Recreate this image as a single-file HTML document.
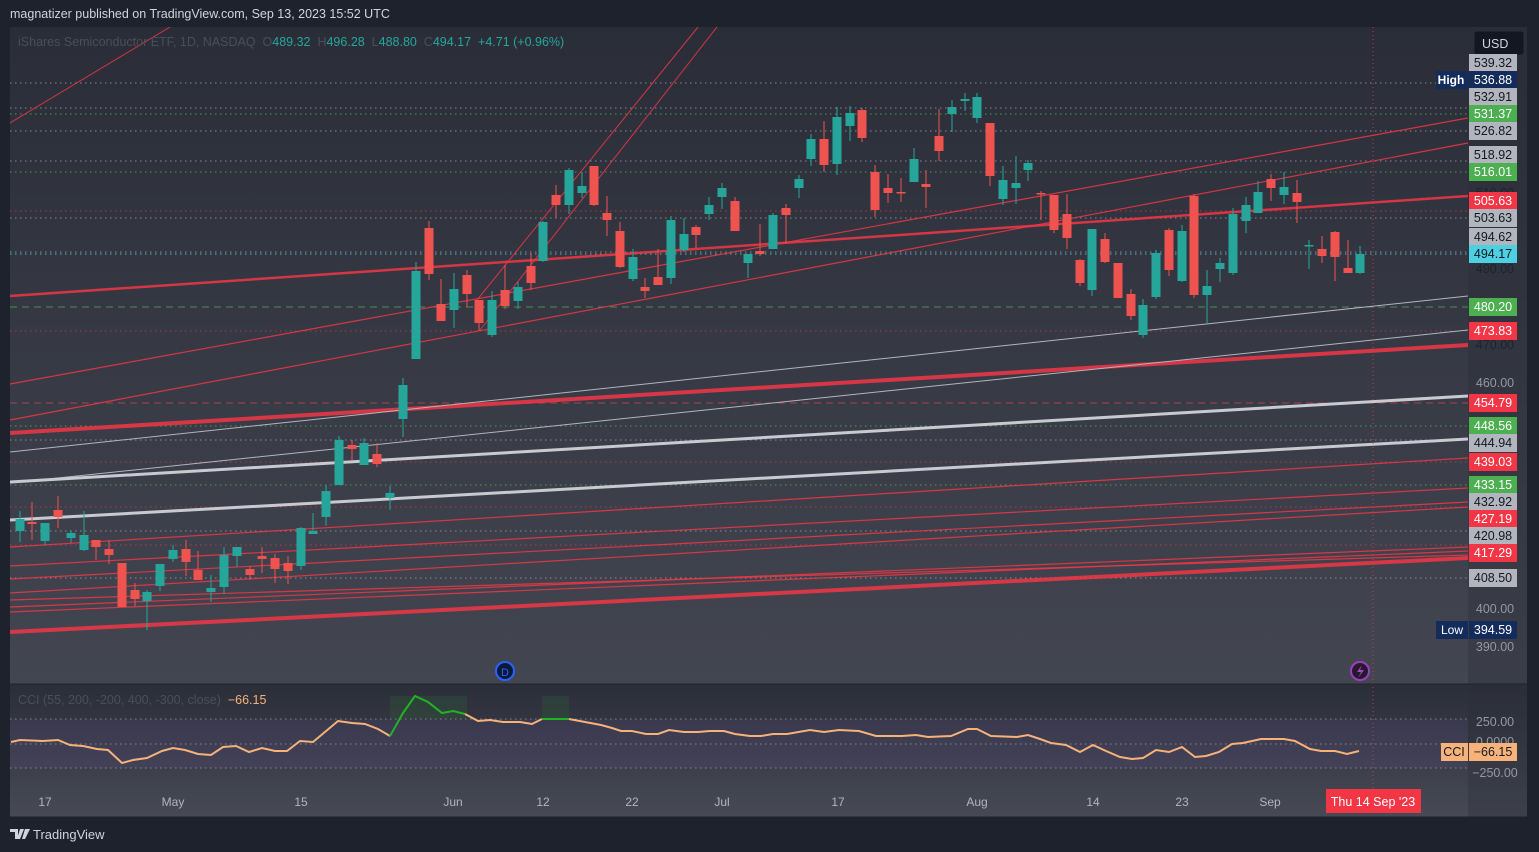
<!DOCTYPE html>
<html><head><meta charset="utf-8"><style>
html,body{margin:0;padding:0;background:#1e222d;width:1539px;height:852px;overflow:hidden;font-family:"Liberation Sans",sans-serif}
#hdr{position:absolute;left:10px;top:7px;color:#d1d4dc;font-size:12.5px}
svg text{font-family:"Liberation Sans",sans-serif}
</style></head><body>
<div id="hdr">magnatizer published on TradingView.com, Sep 13, 2023 15:52 UTC</div>
<svg width="1539" height="852" style="position:absolute;left:0;top:0">
<defs>
<linearGradient id="gm" x1="0" y1="0" x2="0" y2="1"><stop offset="0" stop-color="#2a2d38"/><stop offset="1" stop-color="#434651"/></linearGradient>
<linearGradient id="gc" x1="0" y1="0" x2="0" y2="1"><stop offset="0" stop-color="#2b2e39"/><stop offset="1" stop-color="#474a55"/></linearGradient>
<clipPath id="cm"><rect x="10" y="27" width="1458" height="657"/></clipPath>
</defs>
<rect x="10" y="27" width="1517" height="657" fill="url(#gm)"/>
<rect x="10" y="684" width="1517" height="133" fill="url(#gc)"/>
<rect x="1468" y="27" width="59" height="790" fill="#2a2d36" opacity="0.35"/>
<g clip-path="url(#cm)">
<g stroke-width="1" stroke-dasharray="1.5,3.5" fill="none" opacity="0.85">
<line x1="10" x2="1468" y1="83" y2="83" stroke="#9598a1"/>
<line x1="10" x2="1468" y1="108" y2="108" stroke="#9598a1"/>
<line x1="10" x2="1468" y1="114" y2="114" stroke="#4caf50"/>
<line x1="10" x2="1468" y1="131" y2="131" stroke="#9598a1"/>
<line x1="10" x2="1468" y1="161" y2="161" stroke="#9598a1"/>
<line x1="10" x2="1468" y1="172" y2="172" stroke="#4caf50"/>
<line x1="10" x2="1468" y1="211" y2="211" stroke="#c2394a"/>
<line x1="10" x2="1468" y1="218" y2="218" stroke="#9598a1"/>
<line x1="10" x2="1468" y1="252" y2="252" stroke="#9598a1"/>
<line x1="10" x2="1468" y1="254" y2="254" stroke="#4dd0e1"/>
<line x1="10" x2="1468" y1="331" y2="331" stroke="#c2394a"/>
<line x1="10" x2="1468" y1="426" y2="426" stroke="#4caf50"/>
<line x1="10" x2="1468" y1="440" y2="440" stroke="#9598a1"/>
<line x1="10" x2="1468" y1="462" y2="462" stroke="#c2394a"/>
<line x1="10" x2="1468" y1="485" y2="485" stroke="#4caf50"/>
<line x1="10" x2="1468" y1="507" y2="507" stroke="#c2394a"/>
<line x1="10" x2="1468" y1="531" y2="531" stroke="#9598a1"/>
<line x1="10" x2="1468" y1="545" y2="545" stroke="#c2394a"/>
<line x1="10" x2="1468" y1="578" y2="578" stroke="#9598a1"/>
</g>
<line x1="10" x2="1468" y1="307" y2="307" stroke="#4a8f4e" stroke-dasharray="7,5"/>
<line x1="10" x2="1468" y1="403" y2="403" stroke="#a6424e" stroke-dasharray="7,5"/>
<g stroke="#f23645" fill="none" stroke-opacity="0.85">
<line x1="10" y1="123" x2="170" y2="27" stroke-width="1"/>
<line x1="477" y1="300" x2="698" y2="27" stroke-width="1"/>
<line x1="480" y1="330" x2="717" y2="27" stroke-width="1"/>
<line x1="10" y1="384" x2="1468" y2="118" stroke-width="1.2"/>
<line x1="10" y1="420" x2="1468" y2="143" stroke-width="1.2"/>
<line x1="10" y1="296" x2="1468" y2="196" stroke-width="2.5"/>
<line x1="10" y1="433" x2="1468" y2="345" stroke-width="4"/>
<line x1="10" y1="547" x2="1468" y2="458" stroke-width="1.2"/>
<line x1="10" y1="566" x2="1468" y2="488" stroke-width="1.2"/>
<line x1="10" y1="579" x2="1468" y2="502" stroke-width="1.2"/>
<line x1="10" y1="593" x2="1468" y2="507" stroke-width="1.2"/>
<line x1="10" y1="607" x2="1468" y2="547" stroke-width="1.2"/>
<line x1="10" y1="612" x2="1468" y2="551" stroke-width="1.2"/>
<line x1="10" y1="600" x2="1468" y2="555" stroke-width="1.2"/>
<line x1="10" y1="632" x2="1468" y2="558" stroke-width="4"/>
</g>
<g stroke="#b2b5be" fill="none">
<line x1="10" y1="452" x2="1468" y2="296" stroke-width="1"/>
<line x1="10" y1="483" x2="1468" y2="330" stroke-width="1"/>
<line x1="10" y1="482" x2="1468" y2="396" stroke-width="3" stroke="#c8cad0"/>
<line x1="10" y1="520" x2="1468" y2="439" stroke-width="3" stroke="#c8cad0"/>
</g>
<g id="candles"></g>
</g>
<line x1="1373" y1="27" x2="1373" y2="790" stroke="#f23645" stroke-dasharray="1,3" opacity="0.8"/>
<rect x="10" y="719" width="1458" height="49" fill="#7e57c2" opacity="0.1"/>
<g stroke="#9598a1" stroke-dasharray="1.5,3.5" opacity="0.8"><line x1="10" x2="1468" y1="719" y2="719"/><line x1="10" x2="1468" y1="744" y2="744"/><line x1="10" x2="1468" y1="768" y2="768"/></g>
<rect x="390" y="696" width="77" height="23" fill="#2e7d32" opacity="0.18"/>
<rect x="542" y="696" width="27" height="23" fill="#2e7d32" opacity="0.18"/>
<polyline fill="none" stroke="#f7b27a" stroke-width="2" points="11,742 20,740 43,741 58,740 70,745 83,746 97,749 108,750 122,763 133,760 147,758 162,751 173,748 185,750 198,754 211,755 223,747 236,746 249,752 262,748 275,751 287,751 300,741 313,742 338,721 352,723 365,724 378,729 390,736"/>
<polyline fill="none" stroke="#22b226" stroke-width="2" points="390,736 403,713 415,696 428,702 442,713 453,711 465,714"/>
<polyline fill="none" stroke="#f7b27a" stroke-width="2" points="465,714 478,721 490,720 503,722 520,722 532,724 542,719"/>
<polyline fill="none" stroke="#22b226" stroke-width="2" points="542,719 569,719"/>
<polyline fill="none" stroke="#f7b27a" stroke-width="2" points="569,719 601,725 612,728 621,731 632,731 646,734 658,734 669,730 684,732 698,732 710,731 724,731 735,734 750,736 761,736 773,734 787,734 810,730 824,732 839,730 859,731 876,736 902,736 916,735 928,737 951,736 968,729 977,729 991,736 1017,737 1028,735 1040,739 1051,743 1066,745 1080,752 1093,745 1106,751 1120,757 1132,759 1143,758 1156,750 1169,752 1182,747 1195,757 1206,756 1219,752 1232,744 1243,743 1261,739 1272,739 1284,739 1295,741 1310,749 1321,751 1335,751 1347,754 1359,751"/>
<line x1="10" x2="1527" y1="684" y2="684" stroke="#1e222d" stroke-width="1"/>
<circle cx="505" cy="671" r="9" fill="#0c1a3a" stroke="#2962ff" stroke-width="2"/>
<text x="505" y="676" fill="#2962ff" font-size="11" text-anchor="middle">D</text>
<circle cx="1360" cy="671" r="9" fill="#241a2e" stroke="#9c3fbf" stroke-width="2"/>
<path d="M1362 665 L1357 672 L1361 672 L1358 678 L1364 670 L1360 670 Z" fill="#ab47bc"/>
<text x="18" y="46" font-size="12.5" fill="#4a4e5a" xml:space="preserve">iShares Semiconductor ETF, 1D, NASDAQ  O<tspan fill="#26a69a">489.32</tspan>  H<tspan fill="#26a69a">496.28</tspan>  L<tspan fill="#26a69a">488.80</tspan>  C<tspan fill="#26a69a">494.17</tspan>  <tspan fill="#26a69a">+4.71 (+0.96%)</tspan></text>
<text x="18" y="704" font-size="12.5" fill="#4a4e5a" xml:space="preserve">CCI (55, 200, -200, 400, -300, close)  <tspan fill="#f7b27a">−66.15</tspan></text>
<rect x="1474" y="31" width="50" height="24" rx="3" fill="#131722" stroke="#2a2e39"/>
<text x="1482" y="48" font-size="12.5" fill="#d1d4dc">USD</text>
<g font-size="12.5" text-anchor="middle" fill="#9598a1">
<text x="1495" y="273" fill="#1e222d">490.00</text>
<text x="1495" y="349" fill="#1e222d">470.00</text>
<text x="1495" y="387">460.00</text>
<text x="1495" y="613">400.00</text>
<text x="1495" y="651">390.00</text>
<text x="1495" y="197" fill="#1e222d">510.00</text>
<text x="1495" y="726">250.00</text>
<text x="1495" y="746">0.0000</text>
<text x="1495" y="777">−250.00</text>
</g>
<g font-size="12.5" text-anchor="middle" id="lbls"></g>
<rect x="1436" y="71" width="32" height="18" fill="#132c5c"/><text x="1451" y="84" font-size="12" fill="#fff" text-anchor="middle" font-weight="bold">High</text>
<rect x="1436" y="621" width="32" height="18" fill="#132c5c"/><text x="1452" y="634" font-size="12" fill="#fff" text-anchor="middle">Low</text>
<rect x="1441" y="743" width="27" height="18" fill="#f7b27a"/><text x="1454" y="756" font-size="12.5" fill="#131722" text-anchor="middle">CCI</text>
<rect x="1469" y="743" width="48" height="18" fill="#f7b27a"/><text x="1493" y="756" font-size="12.5" fill="#131722" text-anchor="middle">−66.15</text>
<g font-size="12" fill="#b2b5be" text-anchor="middle">
<text x="45" y="806">17</text><text x="173" y="806">May</text><text x="301" y="806">15</text><text x="453" y="806">Jun</text><text x="543" y="806">12</text><text x="632" y="806">22</text><text x="722" y="806">Jul</text><text x="838" y="806">17</text><text x="977" y="806">Aug</text><text x="1093" y="806">14</text><text x="1182" y="806">23</text><text x="1270" y="806">Sep</text>
</g>
<rect x="1326" y="789" width="95" height="24" fill="#f23645"/>
<text x="1373" y="806" font-size="12.5" fill="#fff" text-anchor="middle">Thu 14 Sep '23</text>
<rect x="1527" y="27" width="12" height="790" fill="#1e222d"/>
<line x1="10" x2="1527" y1="817" y2="817" stroke="#1e222d"/>
<path d="M10 829 h8 v10 h-3 v-7 h-5 z M20 829 h4 l-4 10 h-3 z M25 829 h5 l-5 10 h-3 z" fill="#d1d4dc"/>
<text x="33" y="839" font-size="13" fill="#d1d4dc">TradingView</text>
</svg>
<script>
var G='#26a69a',R='#ef5350';
var c=[[20,G,519,531,511,542],[32,R,522,524,502,540],[45,G,523,541,523,545],[58,R,510,517,496,528],[71,G,533,538,530,543],[84,G,535,550,511,551],[96,R,540,547,540,560],[109,R,549,555,540,564],[122,R,563,607,563,607],[135,R,590,599,583,606],[147,G,592,601,590,630],[160,G,564,586,564,591],[173,G,550,559,545,562],[186,R,549,562,540,576],[198,R,570,580,551,580],[211,G,588,592,575,602],[224,G,555,587,547,594],[237,G,547,556,547,567],[250,R,569,575,566,580],[262,R,556,559,547,573],[275,R,558,569,554,583],[288,R,563,571,556,584],[301,G,528,566,527,570],[313,G,531,534,513,534],[326,G,491,517,485,526],[339,G,440,485,436,485],[352,R,445,449,440,460],[364,G,443,465,438,465],[377,R,454,464,443,467],[390,G,493,498,486,510],[403,G,385,419,378,437],
[416,G,271,359,262,359],[429,R,228,274,221,280],[441,R,304,321,279,321],[454,G,289,310,273,328],[467,R,275,294,270,307],[479,R,300,323,300,331],[492,G,300,335,291,337],[505,R,290,306,265,309],[518,G,287,301,282,309],[531,R,266,283,253,290],[543,G,222,261,221,262],[556,R,195,205,185,218],[569,G,170,205,168,214],
[582,G,186,193,172,198],[594,R,166,205,166,206],[607,R,213,220,196,236],[620,R,231,267,222,268],[633,G,257,279,249,281],[645,R,287,291,278,298],[658,R,277,285,249,285],[671,G,220,278,216,284],[684,G,234,250,218,252],[696,R,227,235,225,248],[709,G,205,214,197,220],[722,G,188,197,183,209],[735,R,201,231,197,231],[748,G,254,263,254,278],[760,R,251,254,224,256],[773,G,215,249,213,249],[786,R,208,215,204,243],[799,G,179,188,175,198],[811,G,139,159,134,166],[824,R,139,165,121,172],[837,G,117,164,107,175],[850,G,113,126,106,141],[862,R,110,138,108,142],[875,R,172,210,165,217],[888,R,188,193,174,203],[901,R,192,193,178,202],[914,G,159,182,148,182],[926,R,184,187,170,208],[939,R,136,151,109,161],[952,G,107,114,100,132],[965,G,99,101,93,111],[977,G,97,118,93,123],[990,R,123,176,123,186],[1003,G,180,199,166,205],[1016,G,183,188,156,204],
[1028,G,163,170,160,181],[1041,R,193,194,191,220],[1054,R,195,230,195,233],[1067,R,214,238,194,249],[1080,R,260,283,259,286],[1092,G,229,290,229,296],[1105,R,239,262,233,263],[1118,R,263,298,263,298],[1131,R,294,316,289,320],[1143,G,305,335,299,338],[1156,G,253,297,250,299],[1169,R,230,270,228,276],[1182,G,231,281,225,282],[1194,R,196,295,194,298],[1207,G,286,295,270,323],[1220,G,263,269,258,282],[1233,G,214,273,208,275],[1246,G,205,221,197,233],[1258,G,192,213,181,213],[1271,R,179,188,174,201],[1284,G,187,195,172,204],[1297,R,193,202,180,223],[1309,G,245,246,240,269],[1322,R,249,256,236,263],[1335,R,232,257,231,281],[1348,R,268,273,240,273],[1360,G,254,273,246,274]];
var s='';c.forEach(function(d){var x=d[0];s+='<line x1="'+x+'" x2="'+x+'" y1="'+d[4]+'" y2="'+d[5]+'" stroke="'+d[1]+'" stroke-width="1"/>';var h=Math.max(1.5,d[3]-d[2]);s+='<rect x="'+(x-4.5)+'" y="'+d[2]+'" width="9" height="'+h+'" fill="'+d[1]+'"/>';});
document.getElementById('candles').innerHTML=s;
var L=[[63,'539.32','#b2b5be','#131722'],[80,'536.88','#132c5c','#fff'],[97,'532.91','#b2b5be','#131722'],[114,'531.37','#4caf50','#fff'],[131,'526.82','#b2b5be','#131722'],[155,'518.92','#b2b5be','#131722'],[172,'516.01','#4caf50','#fff'],[201,'505.63','#f23645','#fff'],[218,'503.63','#b2b5be','#131722'],[237,'494.62','#b2b5be','#131722'],[254,'494.17','#4dd0e1','#131722'],[307,'480.20','#4caf50','#fff'],[331,'473.83','#f23645','#fff'],[403,'454.79','#f23645','#fff'],[426,'448.56','#4caf50','#fff'],[443,'444.94','#b2b5be','#131722'],[462,'439.03','#f23645','#fff'],[485,'433.15','#4caf50','#fff'],[502,'432.92','#b2b5be','#131722'],[519,'427.19','#f23645','#fff'],[536,'420.98','#b2b5be','#131722'],[553,'417.29','#f23645','#fff'],[578,'408.50','#b2b5be','#131722'],[630,'394.59','#132c5c','#fff']];
var t='';L.forEach(function(l){t+='<rect x="1469" y="'+(l[0]-9)+'" width="48" height="18" fill="'+l[2]+'"/><text x="1493" y="'+(l[0]+4)+'" fill="'+l[3]+'">'+l[1]+'</text>';});
document.getElementById('lbls').innerHTML=t;
</script>
</body></html>
